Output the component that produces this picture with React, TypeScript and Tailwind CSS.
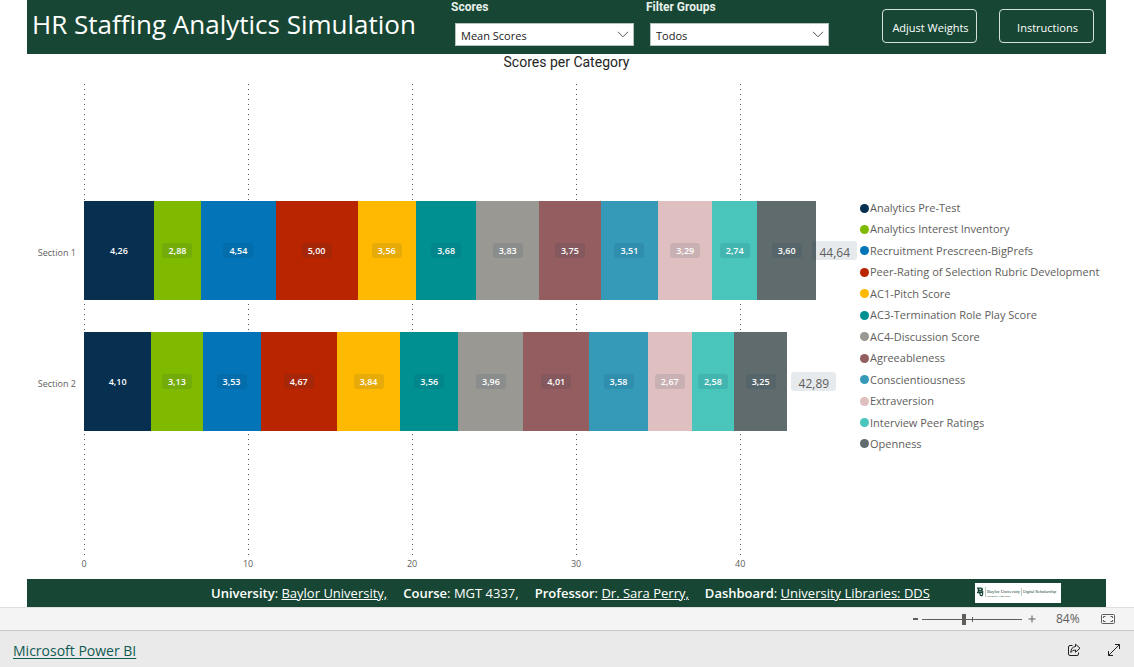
import { useState } from 'react';

type Category = {
  name: string;
  bar: string;
};

type Section = {
  name: string;
  scores: number[];
  total: number;
  totalOffset: string;
};

const categories: Category[] = [
  { name: 'Analytics Pre-Test', bar: 'bg-[#072f50]' },
  { name: 'Analytics Interest Inventory', bar: 'bg-[#7fba00]' },
  { name: 'Recruitment Prescreen-BigPrefs', bar: 'bg-[#0374b7]' },
  { name: 'Peer-Rating of Selection Rubric Development', bar: 'bg-[#b82500]' },
  { name: 'AC1-Pitch Score', bar: 'bg-[#ffb900]' },
  { name: 'AC3-Termination Role Play Score', bar: 'bg-[#009092]' },
  { name: 'AC4-Discussion Score', bar: 'bg-[#999892]' },
  { name: 'Agreeableness', bar: 'bg-[#945d60]' },
  { name: 'Conscientiousness', bar: 'bg-[#3599b8]' },
  { name: 'Extraversion', bar: 'bg-[#dfbfbf]' },
  { name: 'Interview Peer Ratings', bar: 'bg-[#4ac5bb]' },
  { name: 'Openness', bar: 'bg-[#5f6b6d]' },
];

const sections: Section[] = [
  {
    name: 'Section 1',
    scores: [4.26, 2.88, 4.54, 5.0, 3.56, 3.68, 3.83, 3.75, 3.51, 3.29, 2.74, 3.6],
    total: 44.64,
    totalOffset: '-ml-1',
  },
  {
    name: 'Section 2',
    scores: [4.1, 3.13, 3.53, 4.67, 3.84, 3.56, 3.96, 4.01, 3.58, 2.67, 2.58, 3.25],
    total: 42.89,
    totalOffset: 'ml-1',
  },
];

const ticks = [0, 10, 20, 30, 40];
const axisMax = 47;

const percent = (value: number) => `${(value / axisMax) * 100}%`;
const formatScore = (value: number) => value.toFixed(2).replace('.', ',');

function FilterSelect({ id, label, value }: { id: string; label: string; value: string }) {
  return (
    <div className="w-[183px]">
      <label
        htmlFor={id}
        className="block font-[Roboto,sans-serif] text-[12px] leading-[15px] font-bold text-[#e8f0ec]"
      >
        {label}
      </label>
      <div className="relative mt-2 ml-1">
        <select
          id={id}
          defaultValue={value}
          className="block h-[23px] w-full appearance-none border border-[#b4c4bc] bg-white pt-1 pl-[5px] text-[11px] text-[#212121]"
        >
          <option>{value}</option>
        </select>
        <svg
          viewBox="0 0 12 7"
          fill="none"
          stroke="#555"
          className="pointer-events-none absolute top-2 right-[5px] h-[7px] w-3"
        >
          <path d="M1 .8 6 5.8 11 .8" />
        </svg>
      </div>
    </div>
  );
}

function HeaderButton({ children }: { children: string }) {
  return (
    <button className="h-[34px] w-[95px] rounded-[4px] border border-[#d5e0da] pt-1 pl-[2px] text-[11px] font-medium whitespace-nowrap text-white">
      {children}
    </button>
  );
}

function SectionBar({ section }: { section: Section }) {
  return (
    <div className="relative flex h-[99px] items-center">
      <span className="absolute right-full mr-2 pt-1 text-[9px] whitespace-nowrap text-[#605e5c]">
        {section.name}
      </span>
      {section.scores.map((score, index) => (
        <div
          key={categories[index].name}
          className={`flex h-full shrink-0 items-center justify-center ${categories[index].bar}`}
          style={{ width: percent(score) }}
        >
          <span className="flex h-[15px] w-[30px] items-center justify-center rounded-[3px] bg-[#072f50]/10 pt-px text-[9px] font-semibold text-white">
            {formatScore(score)}
          </span>
        </div>
      ))}
      <span
        className={`flex h-[19px] w-[45px] shrink-0 items-center justify-center rounded-[3px] bg-[#072f50]/10 pt-1 text-[12px] text-[#605e5c] ${section.totalOffset}`}
      >
        {formatScore(section.total)}
      </span>
    </div>
  );
}

function ScoresChart() {
  return (
    <section className="mr-7 ml-[27px] flex flex-1 flex-col">
      <h2 className="text-center font-[Roboto,sans-serif] text-[14px] leading-4 text-[#252423]">
        Scores per Category
      </h2>
      <div className="mt-[13px] flex flex-1">
        <div className="ml-[57px] flex flex-1 flex-col">
          <div className="relative flex flex-1 flex-col justify-center gap-8 pb-[6px]">
            {ticks.map((tick) => (
              <div
                key={tick}
                className="absolute inset-y-0 w-px bg-[repeating-linear-gradient(to_bottom,transparent_0_1px,#555_1px_2px,transparent_2px_5px)]"
                style={{ left: percent(tick) }}
              />
            ))}
            {sections.map((section) => (
              <SectionBar key={section.name} section={section} />
            ))}
          </div>
          <div className="relative h-6">
            {ticks.map((tick) => (
              <span
                key={tick}
                className="absolute top-[3px] -translate-x-1/2 text-[9px] leading-3 text-[#605e5c]"
                style={{ left: percent(tick) }}
              >
                {tick}
              </span>
            ))}
          </div>
        </div>
        <ul className="mt-[115px] flex h-[256px] w-[251px] flex-col justify-between pl-[5px]">
          {categories.map((category) => (
            <li
              key={category.name}
              className="flex items-center gap-px text-[11px] leading-5 whitespace-nowrap text-[#605e5c]"
            >
              <span className={`size-[9px] shrink-0 rounded-full ${category.bar}`} />
              {category.name}
            </li>
          ))}
        </ul>
      </div>
    </section>
  );
}

function LibraryLogo() {
  return (
    <svg viewBox="0 0 86 20" className="h-5 w-[86px] bg-white" role="img" aria-label="Baylor University">
      <path
        fillRule="evenodd"
        d="M2 4.500h4.200q1.800 0 1.800 1.500 0 .9-.7 1.300.9.400.9 1.400 0 1.600-2 1.600H2V9.100h.7V5.700H2ZM4.300 5.700v1.100h1.300q.6 0 .6-.5t-.6-.6ZM4.300 7.900v1.200h1.500q.6 0 .6-.6t-.6-.6Z"
        fill="#174734"
      />
      <path d="M5 8v3q0 1.700 1.300 1.700T7.600 11V8" fill="none" stroke="#174734" strokeWidth="1.200" />
      <path d="M10.500 4v10M46.500 5v8" stroke="#8ba399" strokeWidth=".6" />
      <text x="12" y="10" fontSize="4.600" fill="#174734" className="font-['Liberation_Serif',serif]">
        Baylor University
      </text>
      <text x="12" y="14" fontSize="2" fill="#174734" className="font-['Liberation_Sans',sans-serif]">
        UNIVERSITY LIBRARIES
      </text>
      <text x="48" y="10" fontSize="4" fill="#174734" className="font-['Liberation_Sans',sans-serif]">
        Digital Scholarship
      </text>
    </svg>
  );
}

function CreditsBar() {
  return (
    <footer className="mr-7 ml-[27px] flex h-7 items-center bg-[#174734] pl-[184px] text-[13px] whitespace-nowrap text-white">
      <p className="flex flex-1 gap-4 pt-px">
        <span>
          <b className="font-semibold">University</b>:{' '}
          <a href="#university" className="underline">
            Baylor University,
          </a>
        </span>
        <span>
          <b className="font-semibold">Course</b>: MGT 4337,
        </span>
        <span>
          <b className="font-semibold">Professor</b>:{' '}
          <a href="#professor" className="underline">
            Dr. Sara Perry,
          </a>
        </span>
        <span>
          <b className="font-semibold">Dashboard</b>:{' '}
          <a href="#dashboard" className="underline">
            University Libraries: DDS
          </a>
        </span>
      </p>
      <div className="mr-[45px]">
        <LibraryLogo />
      </div>
    </footer>
  );
}

function ZoomBar() {
  const [zoom, setZoom] = useState(42);

  return (
    <div className="flex h-6 items-center justify-end border-t border-b border-t-[#dedede] border-b-[#c8c8c8] bg-[#f4f4f4] pr-[19px] text-[#605e5c]">
      <button aria-label="Zoom out" className="flex h-4 w-[5px] items-center">
        <span className="h-[2px] w-full bg-[#605e5c]" />
      </button>
      <div className="relative ml-1 flex h-3 w-[100px] items-center">
        <span className="absolute left-1/2 h-[5px] w-px bg-[#605e5c]" />
        <input
          type="range"
          aria-label="Zoom"
          value={zoom}
          onChange={(event) => setZoom(Number(event.target.value))}
          className="relative h-3 w-full appearance-none bg-[linear-gradient(#605e5c,#605e5c)] bg-[length:100%_1px] bg-center bg-no-repeat [&::-webkit-slider-thumb]:h-[11px] [&::-webkit-slider-thumb]:w-1 [&::-webkit-slider-thumb]:appearance-none [&::-webkit-slider-thumb]:bg-[#605e5c]"
        />
      </div>
      <button aria-label="Zoom in" className="ml-[6px]">
        <svg viewBox="0 0 8 8" stroke="#605e5c" className="size-2">
          <path d="M4 .5v7M.5 4h7" />
        </svg>
      </button>
      <span className="ml-5 w-6 text-[12px] leading-4">84%</span>
      <button aria-label="Fit to page" className="ml-[21px]">
        <svg viewBox="0 0 14 10" fill="none" stroke="#605e5c" className="h-[10px] w-[14px]">
          <rect x=".5" y=".5" width="13" height="9" rx="1" />
          <path d="M2.500 4V2.500h2M9.500 2.500h2V4M11.500 6v1.500h-2M4.500 7.500h-2V6" />
        </svg>
      </button>
    </div>
  );
}

function BrandBar() {
  return (
    <div className="flex h-9 items-center bg-[#eaeaea] px-[13px]">
      <a href="#powerbi" className="mt-1 text-[14px] leading-5 text-[#0f5b52] underline underline-offset-2">
        Microsoft Power BI
      </a>
      <button aria-label="Share" className="mt-[2px] ml-auto">
        <svg viewBox="0 0 14 14" fill="none" stroke="#212121" strokeLinejoin="round" className="size-[14px]">
          <path d="M5.500 2.500H3Q1.500 2.500 1.500 4v7Q1.500 12.500 3 12.500h7q1.500 0 1.500-1.500V9.500" />
          <path d="M8.500 1.200 13 5.200 8.500 9.200V7Q5.500 6.700 3.800 9.500 4 4 8.500 3.500Z" />
        </svg>
      </button>
      <button aria-label="Full screen" className="mt-[2px] ml-[26px]">
        <svg viewBox="0 0 14 14" fill="none" stroke="#212121" className="size-[14px]">
          <path d="M8 1.500h4.500V6M12.500 1.500l-11 11M1.500 8v4.500H6" />
        </svg>
      </button>
    </div>
  );
}

export default function App() {
  return (
    <div className="flex min-h-screen flex-col bg-white font-['Open_Sans','Noto_Sans',sans-serif]">
      <header className="mr-7 ml-[27px] flex h-[54px] items-start bg-[#174734] pr-3 pl-[5px]">
        <h1 className="flex-1 pt-[6px] text-[26px] leading-9 whitespace-nowrap text-white">
          HR Staffing Analytics Simulation
        </h1>
        <div className="flex gap-3">
          <FilterSelect id="scores" label="Scores" value="Mean Scores" />
          <FilterSelect id="groups" label="Filter Groups" value="Todos" />
        </div>
        <div className="mt-[9px] ml-[53px] flex gap-[22px]">
          <HeaderButton>Adjust Weights</HeaderButton>
          <HeaderButton>Instructions</HeaderButton>
        </div>
      </header>
      <ScoresChart />
      <CreditsBar />
      <ZoomBar />
      <BrandBar />
    </div>
  );
}
